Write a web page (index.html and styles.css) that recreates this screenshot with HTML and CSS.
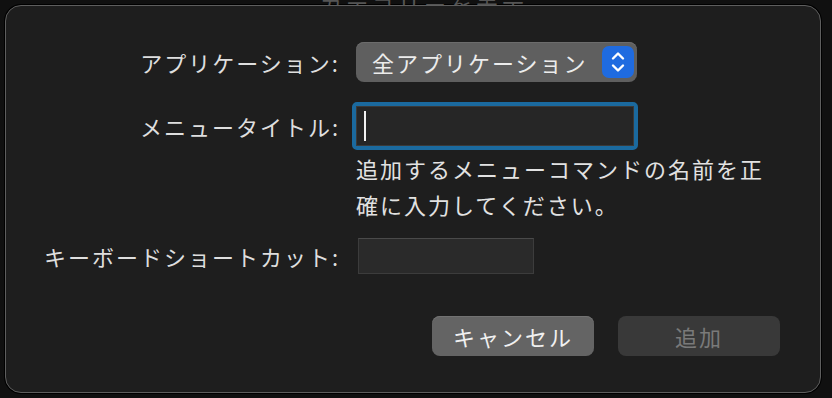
FILE: index.html
```html
<!DOCTYPE html>
<html lang="ja">
<head>
  <meta charset="UTF-8" />
  <meta name="viewport" content="width=device-width, initial-scale=1.0"/>
  <title>メニューコマンドを追加</title>
  <link rel="stylesheet" href="styles.css">
</head>
<body>

  <!-- window behind the sheet, only its bottom edge shows -->
  <div class="behind">
    <span class="behind-text">カテゴリーを表示</span>
  </div>

  <!-- Sheet -->
  <div class="dialog">
    <div class="form">
      <label class="field-label" for="app">アプリケーション:</label>
      <div class="popup" id="app">
        <span class="popup-text">全アプリケーション</span>
        <span class="stepper">
          <svg width="18" height="26" viewBox="0 0 18 26">
            <path d="M4 9.5 L9 4.5 L14 9.5" fill="none" stroke="#fff" stroke-width="2.4" stroke-linecap="round" stroke-linejoin="round"/>
            <path d="M4 16.5 L9 21.5 L14 16.5" fill="none" stroke="#fff" stroke-width="2.4" stroke-linecap="round" stroke-linejoin="round"/>
          </svg>
        </span>
      </div>

      <label class="field-label row-title" for="title">メニュータイトル:</label>
      <div class="focus-ring row-title">
        <div class="text-input" id="title"><span class="caret"></span></div>
      </div>

      <div></div>
      <p class="help">追加するメニューコマンドの名前を正確に入力してください。</p>

      <label class="field-label row-shortcut" for="shortcut">キーボードショートカット:</label>
      <div class="shortcut row-shortcut" id="shortcut"></div>
    </div>

    <div class="btn-group">
      <button class="btn cancel">キャンセル</button>
      <button class="btn add" disabled>追加</button>
    </div>
  </div>

</body>
</html>
```

FILE: styles.css
```css
* {
  box-sizing: border-box;
}

body {
  margin: 0;
  height: 398px;
  overflow: hidden;
  background: #101010;
  font-family: "Noto Sans CJK JP", "Noto Sans", sans-serif;
  color: #e0e0e0;
}

.behind {
  height: 5px;
  overflow: hidden;
  position: relative;
}

.behind-text {
  position: absolute;
  left: 320px;
  bottom: -14px;
  font-size: 22px;
  letter-spacing: 4px;
  color: #555;
}

.dialog {
  margin-left: 5px;
  width: 816px;
  height: 388px;
  background: #1e1e1e;
  border: 1px solid #5e5e5e;
  border-radius: 16px;
  box-shadow: 0 0 0 1px #000;
  padding-top: 36px;
}

.form {
  display: grid;
  grid-template-columns: 334px 1fr;
  column-gap: 12px;
  align-items: center;
}

.field-label {
  text-align: right;
  font-size: 22px;
  letter-spacing: 2px;
  color: #dedede;
  white-space: nowrap;
}

.popup {
  margin-left: 4px;
  width: 281px;
  height: 40px;
  background: #5f5f5f;
  border-radius: 8px;
  display: flex;
  align-items: center;
  justify-content: space-between;
  padding: 0 3px 0 16px;
  box-shadow: inset 0 1px 0 #6c6c6c;
}

.popup-text {
  font-size: 22px;
  letter-spacing: 2px;
  color: #ececec;
  white-space: nowrap;
}

.stepper {
  width: 32px;
  height: 32px;
  border-radius: 7px;
  background: #1f6be0;
  display: flex;
  align-items: center;
  justify-content: center;
}

.row-title {
  margin-top: 20px;
}

.focus-ring {
  width: 286px;
  height: 48px;
  border: 4px solid #1b6a9f;
  border-radius: 5px;
  background: #1b6a9f;
}

.text-input {
  height: 100%;
  background: #262626;
  border: 1px solid #3a3a3a;
  display: flex;
  align-items: center;
  padding-left: 7px;
}

.caret {
  width: 2px;
  height: 30px;
  background: #f2f2f2;
}

.help {
  grid-column: 2;
  margin: 0 0 0 4px;
  width: 420px;
  font-size: 22px;
  letter-spacing: 2px;
  line-height: 36px;
  color: #e2e2e2;
}

.row-shortcut {
  margin-top: 16px;
}

.shortcut {
  margin-left: 6px;
  width: 176px;
  height: 36px;
  background: #2a2a2a;
  border: 1px solid #3c3c3c;
  border-top-color: #4a4a4a;
}

.btn-group {
  display: flex;
  justify-content: flex-end;
  gap: 24px;
  margin-top: 42px;
  padding-right: 40px;
}

.btn {
  width: 162px;
  height: 40px;
  border: none;
  border-radius: 8px;
  font-family: inherit;
  font-size: 22px;
  letter-spacing: 2px;
  padding: 0;
}

.cancel {
  background: #646464;
  color: #f0f0f0;
  box-shadow: inset 0 1px 0 #727272;
}

.add {
  background: #393939;
  color: #7a7a7a;
}
```
